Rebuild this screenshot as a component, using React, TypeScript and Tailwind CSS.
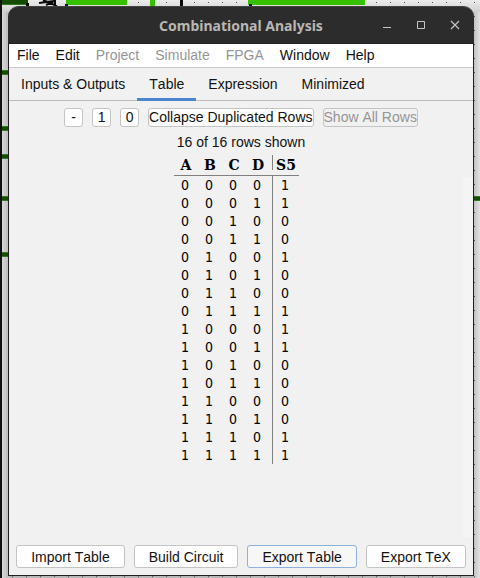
import React from "react";

const MENUS = [
  { label: "File", enabled: true },
  { label: "Edit", enabled: true },
  { label: "Project", enabled: false },
  { label: "Simulate", enabled: false },
  { label: "FPGA", enabled: false },
  { label: "Window", enabled: true },
  { label: "Help", enabled: true },
];

const TABS = ["Inputs & Outputs", "Table", "Expression", "Minimized"];

const INPUTS = ["A", "B", "C", "D"];

const OUTPUT = "1100100111000011";

const ACTIONS = ["Import Table", "Build Circuit", "Export Table", "Export TeX"];

/** The circuit canvas that shows around the edges of the window. */
function CircuitCanvas() {
  return (
    <svg aria-hidden="true" className="absolute inset-0 h-full w-full">
      <defs>
        <pattern id="grid" x="12" y="2" width="14" height="14" patternUnits="userSpaceOnUse">
          <rect width="1" height="1" fill="#555" />
        </pattern>
        <linearGradient id="left" x1="0" x2="1" y1="0" y2="0">
          <stop offset="0" stopColor="#e0e0e0" />
          <stop offset="1" stopColor="#b4b4b4" />
        </linearGradient>
        <linearGradient id="right" x1="0" x2="1" y1="0" y2="0">
          <stop offset="0" stopColor="#bdbdbd" />
          <stop offset="1" stopColor="#e2e2e2" />
        </linearGradient>
        <linearGradient id="top" x1="0" x2="0" y1="0" y2="1">
          <stop offset="0" stopColor="#ececec" />
          <stop offset="1" stopColor="#cfcfcf" />
        </linearGradient>
      </defs>
      <rect width="100%" height="100%" fill="#b8b8b8" />
      <rect width="10" height="100%" fill="url(#left)" />
      <svg x="100%" overflow="visible">
        <rect x="-7" width="7" height="2000" fill="url(#right)" />
      </svg>
      <rect x="2" width="100%" height="12" fill="url(#top)" />
      <rect width="100%" height="100%" fill="url(#grid)" />
      <rect width="2" height="100%" fill="#111" />
      <g fill="#2f7a1c">
        <rect x="2" y="0" width="26" height="5" />
        <rect x="2" y="70" width="8" height="5" />
        <rect x="2" y="126" width="8" height="5" />
        <rect x="2" y="154" width="8" height="5" />
        <rect x="2" y="196" width="8" height="5" />
        <rect x="2" y="252" width="8" height="5" />
        <rect x="472" y="196" width="100%" height="5" />
      </g>
      <g fill="#154c00">
        <rect x="2" y="0" width="26" height="4" />
        <rect x="2" y="71" width="8" height="3" />
        <rect x="2" y="127" width="8" height="3" />
        <rect x="2" y="155" width="8" height="3" />
        <rect x="2" y="197" width="8" height="3" />
        <rect x="2" y="253" width="8" height="3" />
        <rect x="472" y="197" width="100%" height="3" />
      </g>
      <g fill="#36c100">
        <rect x="66" y="0" width="61" height="5" />
        <rect x="150" y="0" width="5" height="8" />
        <rect x="248" y="0" width="117" height="5" />
      </g>
      <g fill="#0a0a0a">
        <rect x="26" y="3" width="3" height="4" />
        <rect x="180" y="0" width="3" height="8" />
        <rect x="249" y="4" width="3" height="3" />
        <rect x="65" y="4" width="3" height="3" />
      </g>
      <path d="M39 3 L54 1 M43 0 L57 6 M46 5 L53 2 M55 0 V7" stroke="#0a0a0a" strokeWidth="2" fill="none" />
    </svg>
  );
}

function TitleBar() {
  return (
    <header className="grid h-[37px] grid-cols-[1fr_auto_1fr] items-center rounded-t-[11px] border-t border-t-[#434343] bg-[#2c2c2c]">
      <span />
      <h1 className="pt-px font-['Noto_Sans',sans-serif] text-sm font-bold text-[#b9b7b3]">
        Combinational Analysis
      </h1>
      <div className="flex justify-end gap-[18px] pr-[11px] text-[#c4c4c4]">
        <button type="button" aria-label="Minimize" className="size-4">
          <svg viewBox="0 0 16 16" className="size-4">
            <path d="M4 10.5h8" stroke="currentColor" />
          </svg>
        </button>
        <button type="button" aria-label="Maximize" className="size-4">
          <svg viewBox="0 0 16 16" className="size-4">
            <path d="M4.5 4.5h7v7h-7z" fill="none" stroke="currentColor" />
          </svg>
        </button>
        <button type="button" aria-label="Close" className="size-4">
          <svg viewBox="0 0 16 16" className="size-4">
            <path d="M4 4l8 8M12 4l-8 8" stroke="currentColor" strokeWidth="1.2" />
          </svg>
        </button>
      </div>
    </header>
  );
}

function TruthTable() {
  return (
    <table className="border-collapse text-center text-black">
      <thead className="font-['DejaVu_Serif',serif] text-sm leading-[15px]">
        <tr className="h-5 border-b border-[#808080]">
          {INPUTS.map((name) => (
            <th key={name} scope="col" className="w-6 p-0 pl-px align-top">
              <div className="h-[15px] pt-[3px]">{name}</div>
            </th>
          ))}
          <th scope="col" className="w-[29px] p-0 pl-0.5 align-top">
            <div className="h-[15px] border-l border-[#808080] pt-[3px] pl-px">S5</div>
          </th>
        </tr>
      </thead>
      <tbody className="font-['DejaVu_Sans_Condensed','DejaVu_Sans',sans-serif] text-sm leading-[18px]">
        {OUTPUT.split("").map((out, row) => (
          <tr key={row}>
            {INPUTS.map((name, i) => (
              <td key={name} className="p-0 pr-px">
                {(row >> (INPUTS.length - 1 - i)) & 1}
              </td>
            ))}
            <td className="p-0 pl-0.5">
              <div className="border-l border-[#808080] pr-px">{out}</div>
            </td>
          </tr>
        ))}
      </tbody>
    </table>
  );
}

const smallButton =
  "h-[19px] rounded-[3px] border border-[#c4c4c4] bg-white leading-[17px] disabled:bg-[#f1f1f1] disabled:text-[#959595]";

export default function App() {
  return (
    <div className="relative flex h-screen min-h-[560px] flex-col pt-1.5 pr-1.5 pb-0.5 pl-2 font-['Liberation_Sans',Arial,sans-serif] text-sm text-[#111] [font-kerning:none]">
      <CircuitCanvas />
      <div className="relative flex flex-1 flex-col">
        <TitleBar />
        <div className="flex flex-1 flex-col border border-[#202020] bg-[#f1f1f1]">
          <nav aria-label="Menu" className="flex h-6 border-b border-[#c8c8c8] bg-white">
            {MENUS.map((menu) => (
              <button
                key={menu.label}
                type="button"
                disabled={!menu.enabled}
                className="px-2 leading-[23px] disabled:text-[#959595]"
              >
                {menu.label}
              </button>
            ))}
          </nav>

          <div role="tablist" className="flex h-[33px] border-b border-[#bcbcbc]">
            {TABS.map((tab) => (
              <button
                key={tab}
                type="button"
                role="tab"
                aria-selected={tab === "Table"}
                className="h-[33px] border-b-3 border-transparent px-3 pt-px aria-selected:border-[#4a86cf]"
              >
                {tab}
              </button>
            ))}
          </div>

          <div className="flex justify-center gap-[9px] pt-[7px]">
            {["-", "1", "0"].map((value) => (
              <button key={value} type="button" className={`w-[19px] ${smallButton}`}>
                {value}
              </button>
            ))}
            <button type="button" className={smallButton}>
              Collapse Duplicated Rows
            </button>
            <button type="button" disabled className={smallButton}>
              Show All Rows
            </button>
          </div>

          <p className="pt-[7px] text-center leading-4">16 of 16 rows shown</p>

          <main className="flex flex-1 pt-[5px]">
            <div className="flex flex-1 items-start justify-center">
              <TruthTable />
            </div>
            <div className="mt-[22px] w-[10px] bg-[#f4f4f4]" />
          </main>

          <footer className="flex justify-center gap-[9px] pt-2 pb-[7px]">
            {ACTIONS.map((action) => (
              <button
                key={action}
                type="button"
                className={`h-[23px] rounded-[3px] border px-[14px] whitespace-nowrap ${
                  action === "Export Table"
                    ? "border-[#8db2e0] bg-[#f7f7f7]"
                    : "border-[#c4c4c4] bg-white"
                }`}
              >
                {action}
              </button>
            ))}
          </footer>
        </div>
      </div>
    </div>
  );
}
